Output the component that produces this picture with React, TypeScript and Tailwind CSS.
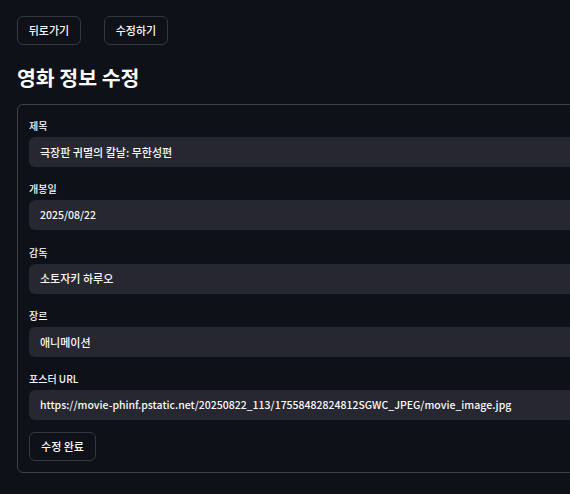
import React from "react";

const fields = [
  { label: "제목", value: "극장판 귀멸의 칼날: 무한성편", size: "text-[11px]" },
  { label: "개봉일", value: "2025/08/22", size: "text-[10.5px]" },
  { label: "감독", value: "소토자키 하루오", size: "text-[11px]" },
  { label: "장르", value: "애니메이션", size: "text-[11px]" },
  { label: "포스터 URL", value: "https://movie-phinf.pstatic.net/20250822_113/17558482824812SGWC_JPEG/movie_image.jpg", size: "text-[10.5px]" },
];

export default function App() {
  return (
    <div className="w-[570px] h-[494px] overflow-hidden bg-[#0e1117] text-[#fafafa] [font-family:'Noto_Sans_CJK_KR','Noto_Sans',sans-serif]">
      <div className="pl-[17px] pt-[16px]">
        <div className="flex gap-[23px]">
          <button className="h-[29px] w-[64px] rounded-[6px] border border-[#363840] bg-[#0e1117] text-[11px] font-medium text-[#fafafa] flex items-center justify-center">
            뒤로가기
          </button>
          <button className="h-[29px] w-[64px] rounded-[6px] border border-[#363840] bg-[#0e1117] text-[11px] font-medium text-[#fafafa] flex items-center justify-center">
            수정하기
          </button>
        </div>
        <h2 className="mt-[17px] text-[20.5px] leading-[30px] font-bold">영화 정보 수정</h2>
        <div className="mt-[12px] w-[700px] rounded-[6px] border border-[#3e4046] pt-[12px] pb-[11px] pl-[11px]">
          <div className="flex flex-col gap-[13.3px]">
            {fields.map((f) => (
              <div key={f.label} className="flex flex-col">
                <label className="h-[20px] text-[10px] leading-[17px] font-medium text-[#fafafa]">{f.label}</label>
                <div className={`h-[30px] rounded-[6px] bg-[#262730] flex items-center pl-[11px] font-medium whitespace-nowrap ${f.size}`}>
                  {f.value}
                </div>
              </div>
            ))}
          </div>
          <button className="mt-[12px] h-[29px] w-[67px] rounded-[6px] border border-[#363840] bg-[#0e1117] text-[11px] font-medium text-[#fafafa] flex items-center justify-center">
            수정 완료
          </button>
        </div>
      </div>
    </div>
  );
}
